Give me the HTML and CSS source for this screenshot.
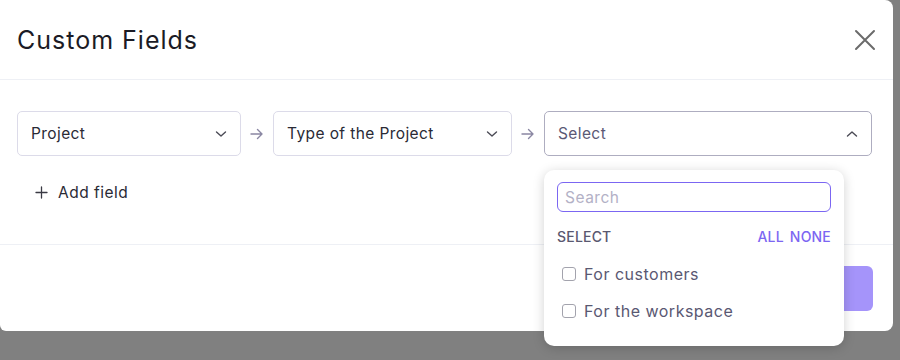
FILE: index.html
```html
<!DOCTYPE html>
<html lang="en">
<head>
    <meta charset="UTF-8">
    <meta name="viewport" content="width=device-width, initial-scale=1.0">
    <title>Custom Fields</title>
    <link rel="stylesheet" href="styles.css">
</head>
<body>
    <div class="modal">
        <div class="modal-header">
            <h1 class="modal-title">Custom Fields</h1>
            <button class="close-button" aria-label="Close">
                <svg width="22" height="22" viewBox="0 0 22 22" fill="none" stroke="#6b6b6b" stroke-width="2" stroke-linecap="round">
                    <path d="M2 2 L20 20 M20 2 L2 20"/>
                </svg>
            </button>
        </div>

        <div class="modal-body">
            <div class="field-row">
                <div class="select select-project">
                    <span class="select-value">Project</span>
                    <svg class="chevron" width="12" height="8" viewBox="0 0 12 8" fill="none" stroke="#4a4a55" stroke-width="1.4" stroke-linecap="round" stroke-linejoin="round"><path d="M1.5 2 L6 6 L10.5 2"/></svg>
                </div>
                <div class="arrow">
                    <svg width="14" height="12" viewBox="0 0 14 12" fill="none" stroke="#8a87a3" stroke-width="1.4" stroke-linecap="round" stroke-linejoin="round"><path d="M1 6 H12 M7.5 1.5 L12 6 L7.5 10.5"/></svg>
                </div>
                <div class="select select-type">
                    <span class="select-value">Type of the Project</span>
                    <svg class="chevron" width="12" height="8" viewBox="0 0 12 8" fill="none" stroke="#4a4a55" stroke-width="1.4" stroke-linecap="round" stroke-linejoin="round"><path d="M1.5 2 L6 6 L10.5 2"/></svg>
                </div>
                <div class="arrow">
                    <svg width="14" height="12" viewBox="0 0 14 12" fill="none" stroke="#8a87a3" stroke-width="1.4" stroke-linecap="round" stroke-linejoin="round"><path d="M1 6 H12 M7.5 1.5 L12 6 L7.5 10.5"/></svg>
                </div>
                <div class="select select-open">
                    <span class="select-placeholder">Select</span>
                    <svg class="chevron" width="12" height="8" viewBox="0 0 12 8" fill="none" stroke="#4a4a55" stroke-width="1.4" stroke-linecap="round" stroke-linejoin="round"><path d="M1.5 6 L6 2 L10.5 6"/></svg>
                </div>
            </div>

            <button class="add-field">
                <svg width="13" height="13" viewBox="0 0 13 13" fill="none" stroke="#3a3a44" stroke-width="1.3" stroke-linecap="round"><path d="M6.5 1 V12 M1 6.5 H12"/></svg>
                <span>Add field</span>
            </button>
        </div>

        <div class="modal-footer">
            <button class="save-button">Save</button>
        </div>
    </div>

    <!-- Open dropdown of the third select -->
    <div class="dropdown">
        <input type="text" class="dropdown-search" placeholder="Search">
        <div class="dropdown-actions">
            <span class="actions-label">SELECT</span>
            <span class="actions-links"><a>ALL</a><a>NONE</a></span>
        </div>
        <label class="option"><input type="checkbox"><span>For customers</span></label>
        <label class="option"><input type="checkbox"><span>For the workspace</span></label>
    </div>
</body>
</html>
```

FILE: styles.css
```css
body {
    margin: 0;
    background-color: #808080;
    font-family: Inter, "Noto Sans", sans-serif;
    width: 900px;
    height: 360px;
    position: relative;
    overflow: hidden;
}

.modal {
    width: 893px;
    height: 331px;
    background-color: #fff;
    border-radius: 0 8px 8px 6px;
    display: flex;
    flex-direction: column;
}

.modal-header {
    height: 80px;
    box-sizing: border-box;
    padding: 0 17px 0 17px;
    display: flex;
    align-items: center;
    justify-content: space-between;
    border-bottom: 1px solid #eef0f5;
}

.modal-title {
    margin: 0;
    font-size: 25px;
    font-weight: 400;
    color: #1b1b25;
    letter-spacing: 1px;
}

.close-button {
    border: none;
    background: none;
    padding: 0;
    display: flex;
    cursor: pointer;
}

.modal-body {
    height: 164px;
    box-sizing: border-box;
    padding: 31px 21px 0 17px;
}

.field-row {
    display: flex;
    align-items: center;
}

.select {
    height: 45px;
    box-sizing: border-box;
    border: 1px solid #dcdbe9;
    border-radius: 5px;
    display: flex;
    align-items: center;
    justify-content: space-between;
    padding: 0 13px 0 13px;
    font-size: 15.5px;
    letter-spacing: 0.4px;
    color: #2a2a35;
}

.select-project {
    width: 224px;
}

.select-type {
    width: 239px;
}

.select-open {
    width: 328px;
    border-color: #aeadc0;
}

.select-placeholder {
    color: #5b5975;
}

.arrow {
    width: 32px;
    display: flex;
    justify-content: center;
    align-items: center;
}

.add-field {
    margin-top: 27px;
    margin-left: 18px;
    border: none;
    background: none;
    padding: 0;
    display: flex;
    align-items: center;
    gap: 10px;
    font-family: inherit;
    font-size: 15.5px;
    letter-spacing: 0.5px;
    color: #2a2a35;
    cursor: pointer;
}

.modal-footer {
    flex: 1;
    border-top: 1px solid #eef0f5;
    display: flex;
    justify-content: flex-end;
    align-items: center;
    padding: 0 20px;
}

.save-button {
    width: 100px;
    height: 45px;
    border: none;
    border-radius: 6px;
    background-color: #a594fa;
    color: #fff;
    font-family: inherit;
    font-size: 15px;
}

/* Dropdown list */
.dropdown {
    position: absolute;
    left: 544px;
    top: 170px;
    width: 300px;
    height: 176px;
    box-sizing: border-box;
    padding: 12px 13px;
    background-color: #fff;
    border-radius: 10px;
    box-shadow: 0 2px 12px rgba(0, 0, 0, 0.18);
}

.dropdown-search {
    width: 100%;
    height: 30px;
    box-sizing: border-box;
    border: 1px solid #7b66f2;
    border-radius: 6px;
    padding: 0 7px;
    font-family: inherit;
    font-size: 15.5px;
    letter-spacing: 0.5px;
    outline: none;
}

.dropdown-search::placeholder {
    color: #b3b1c6;
}

.dropdown-actions {
    display: flex;
    justify-content: space-between;
    margin-top: 16px;
    font-size: 14px;
    font-weight: 500;
    letter-spacing: 0.2px;
}

.actions-label {
    color: #5a5870;
}

.actions-links {
    display: flex;
    gap: 6px;
    color: #7c66f2;
}

.option {
    display: flex;
    align-items: center;
    gap: 8px;
    margin-top: 19px;
    margin-left: 5px;
    font-size: 16px;
    letter-spacing: 0.5px;
    color: #5a5872;
}

.option + .option {
    margin-top: 17px;
}

.option input {
    appearance: none;
    width: 14px;
    height: 14px;
    margin: 0;
    border: 1px solid #a3a3ad;
    border-radius: 3px;
}
```
